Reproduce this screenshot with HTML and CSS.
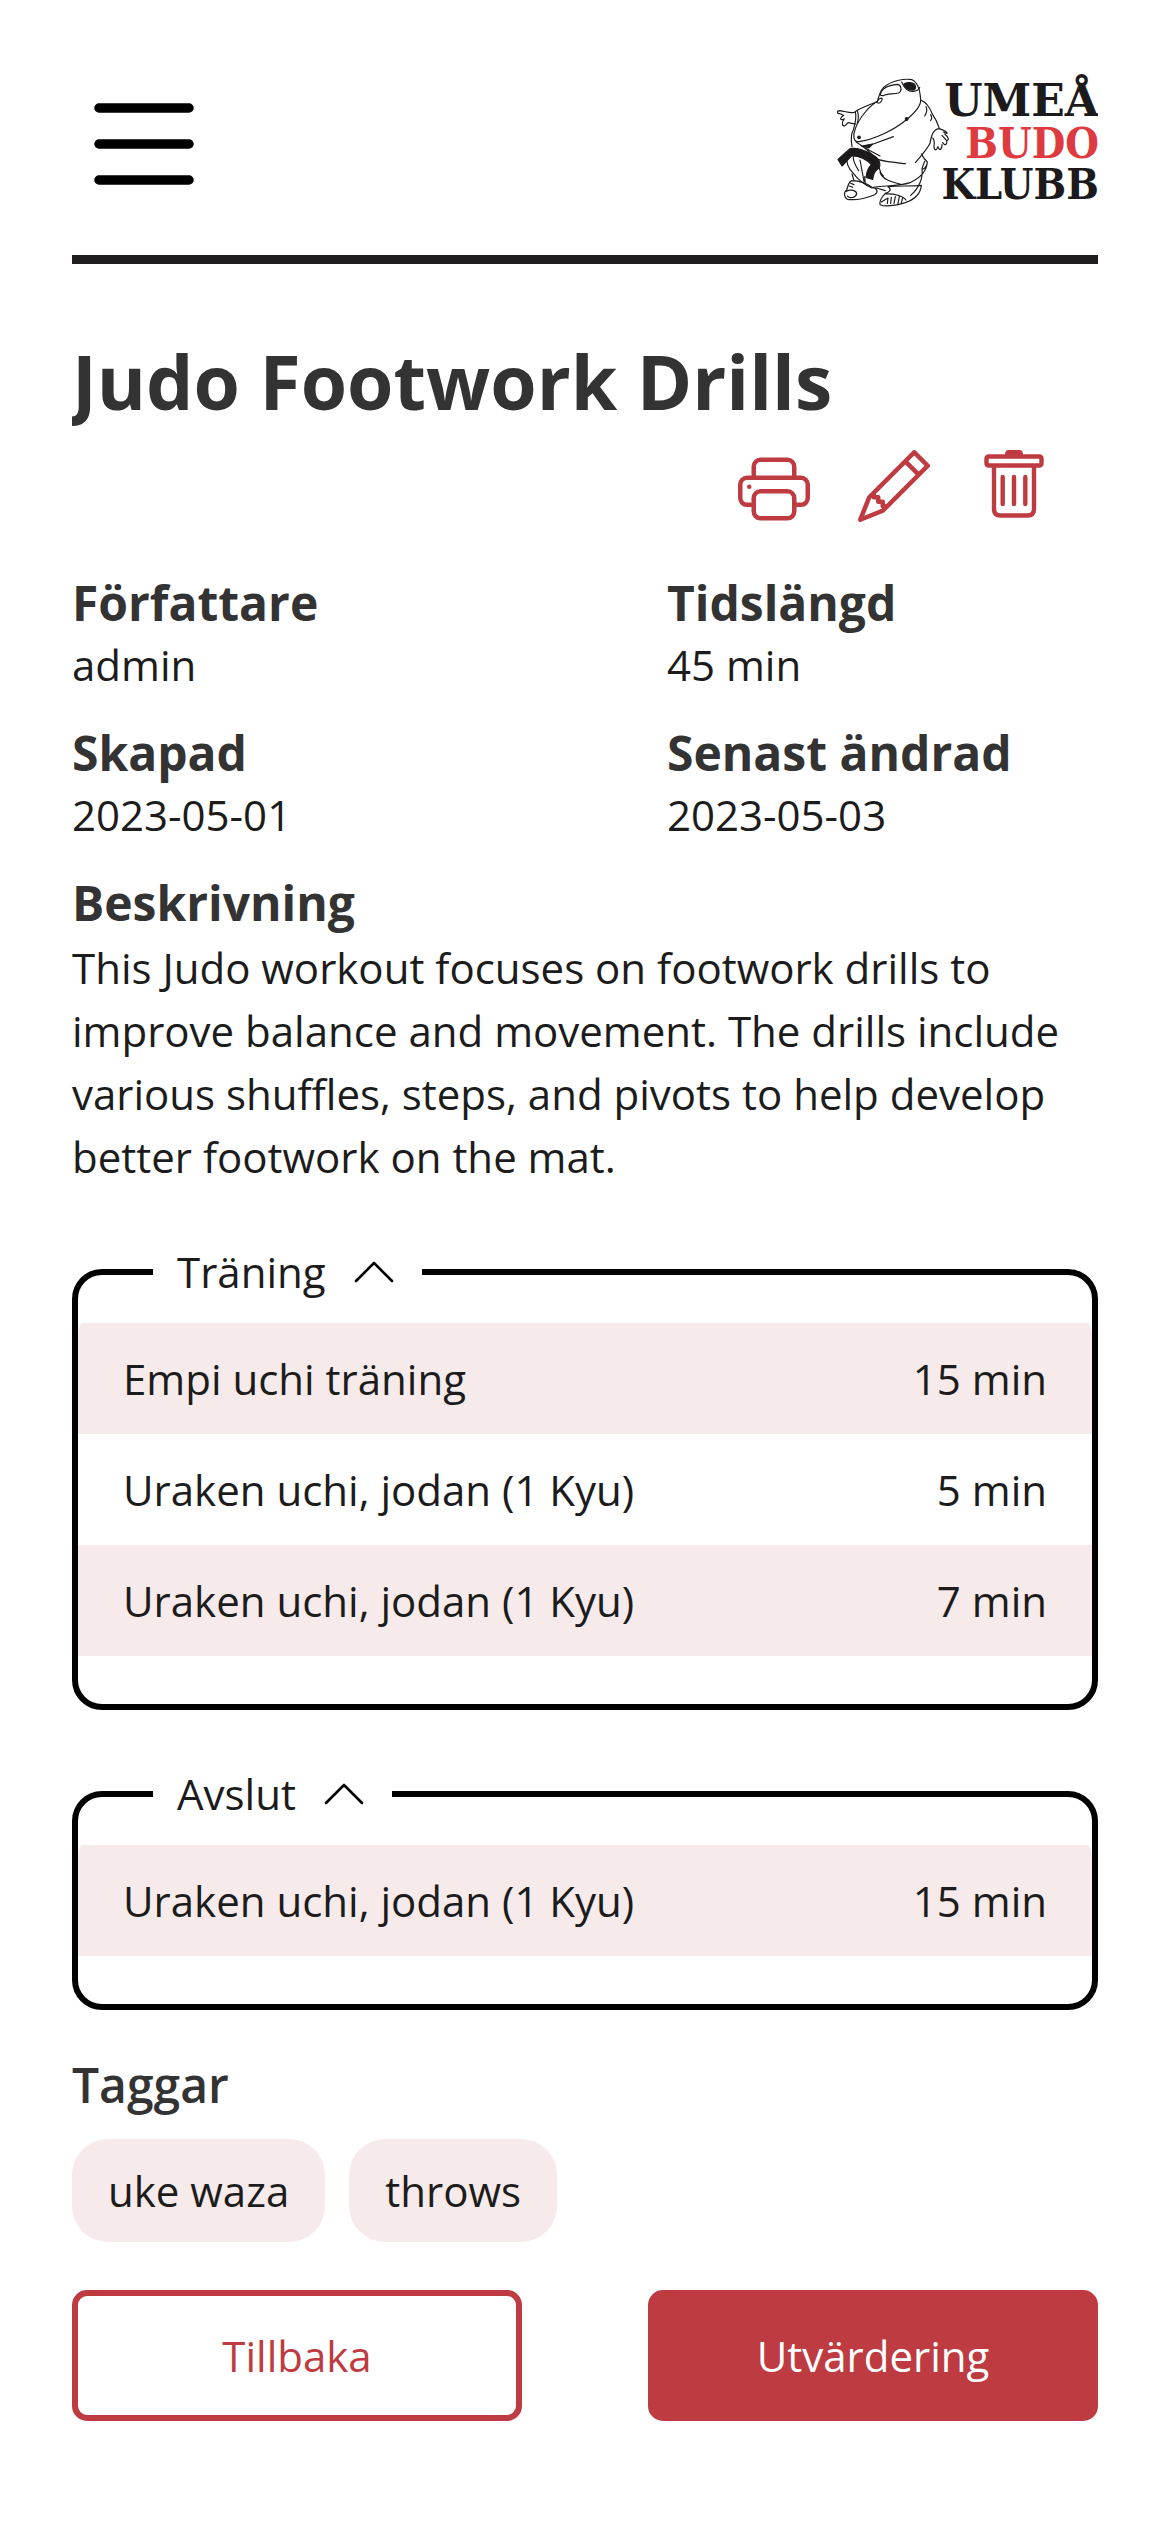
FILE: index.html
```html
<!DOCTYPE html>
<html lang="sv">
<head>
  <meta charset="utf-8">
  <meta name="viewport" content="width=device-width, initial-scale=1">
  <title>Judo Footwork Drills</title>
  <link rel="stylesheet" href="styles.css">
</head>
<body>
  <div class="page">
    <header class="site-header">
      <button class="icon-button" type="button" aria-label="Meny">
        <svg class="menu-icon" viewBox="0 0 144 144" fill="none" stroke="#000" stroke-width="9.5" stroke-linecap="round">
          <path d="M27 36H117M27 72H117M27 108H117"/>
        </svg>
      </button>
      <a class="logo-link" href="#" aria-label="Umeå Budoklubb">
        <svg class="logo" viewBox="0 0 264 144">
          <g transform="translate(-14 -12) scale(.33333)" fill="none" stroke="#1c1a1b" stroke-width="3.500" stroke-linejoin="round" stroke-linecap="round">
            <path d="M172 124C178 108 180 88 196 78C214 64 250 54 276 59C292 66 300 82 302 120C303 136 282 160 262 177C220 212 160 240 116 245C100 246 98 226 106 206C116 176 146 140 172 124"/>
            <path d="M181 103C184 86 204 76 232 73C246 76 246 94 236 99C218 103 200 101 190 107C182 106 180 106 181 103M172 124C178 112 192 110 184 124C180 132 172 130 170 126"/>
            <path d="M245 66C252 82 262 96 280 94C292 92 298 88 299 82"/>
            <path d="M252 72C262 66 276 67 284 73C290 84 286 92 274 90C262 88 254 80 252 72Z" fill="#1c1a1b"/>
            <path d="M170 126C148 134 128 142 112 151L103 157C90 160 80 155 60 152C50 152 50 161 60 161L71 166C62 172 58 180 67 179L73 176C64 188 66 198 74 198C82 192 82 186 88 188C96 192 102 190 108 192M106 155C110 170 106 190 100 210C90 226 94 246 96 260M112 151C116 164 116 176 112 188"/>
            <path d="M302 120C322 128 330 144 336 160C348 178 354 192 358 205M318 140C324 152 318 162 314 168M332 164C336 170 336 176 332 182"/>
            <path d="M358 206C344 206 334 224 330 250C322 268 304 286 286 308M358 206C370 210 382 214 381 220L370 216M374 222C386 232 388 240 380 242L366 226M380 242C382 252 376 260 368 248M366 254C366 268 358 274 354 260C348 274 342 272 342 258C344 246 342 238 338 234"/>
            <path d="M108 246C136 262 156 284 172 298C202 306 228 308 256 311M124 258L160 252L220 230M124 258L180 288"/>
            <path d="M130 259L158 252L146 264Z" fill="#1c1a1b"/>
            <path d="M304 282C310 292 314 300 322 306C320 336 300 354 270 368C236 380 192 376 160 382M316 298L306 326C312 330 320 320 322 308M306 326C310 352 298 384 272 406M180 336C186 358 214 366 240 372M176 320C182 330 178 340 190 348"/>
            <path d="M82 290C78 306 84 324 100 340C112 356 128 372 156 384M100 290C98 304 106 316 116 332M120 300L132 364M134 350L136 372M96 342L102 362"/>
            <path d="M96 362C84 366 84 380 80 390C70 396 72 412 82 418C110 422 140 414 164 404C176 396 172 384 156 382C134 366 114 362 96 362M80 394C92 386 110 392 110 402C106 414 88 416 82 408M92 370L102 374M88 378L98 382M170 384L196 392"/>
            <path d="M204 380C216 388 210 396 196 400C186 410 178 424 180 434C196 442 228 436 256 428C284 418 302 400 304 376C270 380 236 376 204 380M196 402C222 400 250 408 258 420M184 426L204 414L202 430M214 412L212 430M226 410L222 430M238 410L234 430M248 414L244 428"/>
            <path d="M54 298L72 282L90 266C110 262 140 272 160 286C184 300 184 322 170 330C162 336 160 344 158 358L138 352C140 334 146 322 154 314C142 300 116 286 94 288L66 318Z" fill="#1c1a1b"/>
            <circle cx="117" cy="232" r="4" fill="#1c1a1b"/>
            <circle cx="260" cy="177" r="4" fill="#1c1a1b"/>
          </g>
          <g class="logo-text" text-anchor="end">
            <text class="logo-line-wide" x="265" y="44">UMEÅ</text>
            <text class="logo-line logo-line-red" x="265" y="86">BUDO</text>
            <text class="logo-line" x="265" y="127">KLUBB</text>
          </g>
        </svg>
      </a>
    </header>

    <main>
      <h1 class="title">Judo Footwork Drills</h1>
      <div class="actions">
        <button class="icon-button" type="button" aria-label="Skriv ut">
          <svg class="action-icon" viewBox="0 -.67 16 16" fill="currentColor">
            <path d="M2.5 8a.5.5 0 1 0 0-1 .5.5 0 0 0 0 1z"/>
            <path d="M5 1a2 2 0 0 0-2 2v2H2a2 2 0 0 0-2 2v3a2 2 0 0 0 2 2h1v1a2 2 0 0 0 2 2h6a2 2 0 0 0 2-2v-1h1a2 2 0 0 0 2-2V7a2 2 0 0 0-2-2h-1V3a2 2 0 0 0-2-2H5zM4 3a1 1 0 0 1 1-1h6a1 1 0 0 1 1 1v2H4V3zm1 5a2 2 0 0 0-2 2v1H2a1 1 0 0 1-1-1V7a1 1 0 0 1 1-1h12a1 1 0 0 1 1 1v3a1 1 0 0 1-1 1h-1v-1a2 2 0 0 0-2-2H5zm7 2v3a1 1 0 0 1-1 1H5a1 1 0 0 1-1-1v-3a1 1 0 0 1 1-1h6a1 1 0 0 1 1 1z"/>
          </svg>
        </button>
        <button class="icon-button" type="button" aria-label="Redigera">
          <svg class="action-icon" viewBox="0 0 16 16" fill="currentColor">
            <path d="M12.146.146a.5.5 0 0 1 .708 0l3 3a.5.5 0 0 1 0 .708l-10 10a.5.5 0 0 1-.168.11l-5 2a.5.5 0 0 1-.65-.65l2-5a.5.5 0 0 1 .11-.168l10-10zM11.207 2.5 13.5 4.793 14.793 3.5 12.5 1.207 11.207 2.5zm1.586 3L10.5 3.207 4 9.707V10h.5a.5.5 0 0 1 .5.5v.5h.5a.5.5 0 0 1 .5.5v.5h.293l6.5-6.5zm-9.761 5.175-.106.106-1.528 3.821 3.821-1.528.106-.106A.5.5 0 0 1 5 12.5V12h-.5a.5.5 0 0 1-.5-.5V11h-.5a.5.5 0 0 1-.468-.325z"/>
          </svg>
        </button>
        <button class="icon-button" type="button" aria-label="Ta bort">
          <svg class="action-icon" viewBox="0 0 72 72" fill="none" stroke="currentColor" stroke-width="4.4" stroke-linecap="round">
            <path d="M27 5C27 2 28 0 31 0H41C44 0 45 2 45 5Z" fill="currentColor" stroke="none"/>
            <rect x="8.5" y="6.5" width="55" height="9" rx="2"/>
            <path d="M16 17V59Q16 65.500 22.500 65.500H49.500Q56 65.500 56 59V17M24.700 27V54M36 27V54M47.300 27V54"/>
          </svg>
        </button>
      </div>

      <dl class="details">
        <div>
          <dt class="heading">Författare</dt>
          <dd class="value">admin</dd>
        </div>
        <div>
          <dt class="heading">Tidslängd</dt>
          <dd class="value">45 min</dd>
        </div>
        <div>
          <dt class="heading">Skapad</dt>
          <dd class="value">2023-05-01</dd>
        </div>
        <div>
          <dt class="heading">Senast ändrad</dt>
          <dd class="value">2023-05-03</dd>
        </div>
      </dl>

      <section class="description">
        <h2 class="heading">Beskrivning</h2>
        <p>This Judo workout focuses on footwork drills to improve balance and movement. The drills include various shuffles, steps, and pivots to help develop better footwork on the mat.</p>
      </section>

      <fieldset class="panel">
        <legend class="panel-legend">
          <button class="panel-toggle" type="button" aria-expanded="true">
            Träning
            <svg class="chevron" viewBox="0 0 48 48" fill="none" stroke="#000" stroke-width="2.600" stroke-linecap="round" stroke-linejoin="round"><path d="M6 33L24 15L42 33"/></svg>
          </button>
        </legend>
        <div class="panel-body">
          <ul>
            <li class="activity"><span>Empi uchi träning</span><span>15 min</span></li>
            <li class="activity"><span>Uraken uchi, jodan (1 Kyu)</span><span>5 min</span></li>
            <li class="activity"><span>Uraken uchi, jodan (1 Kyu)</span><span>7 min</span></li>
          </ul>
        </div>
      </fieldset>

      <fieldset class="panel">
        <legend class="panel-legend">
          <button class="panel-toggle" type="button" aria-expanded="true">
            Avslut
            <svg class="chevron" viewBox="0 0 48 48" fill="none" stroke="#000" stroke-width="2.600" stroke-linecap="round" stroke-linejoin="round"><path d="M6 33L24 15L42 33"/></svg>
          </button>
        </legend>
        <div class="panel-body">
          <ul>
            <li class="activity"><span>Uraken uchi, jodan (1 Kyu)</span><span>15 min</span></li>
          </ul>
        </div>
      </fieldset>

      <section class="tag-section">
        <h2 class="heading heading-light">Taggar</h2>
        <ul class="tags">
          <li class="tag">uke waza</li>
          <li class="tag">throws</li>
        </ul>
      </section>

      <div class="buttons">
        <button class="button button-outline" type="button">Tillbaka</button>
        <button class="button button-filled" type="button">Utvärdering</button>
      </div>
    </main>
  </div>
</body>
</html>
```
FILE: styles.css
```css
* {
  box-sizing: border-box;
}

body {
  margin: 0;
  background: #fff;
  color: #1c1c1c;
  font-family: "Open Sans", sans-serif;
  font-size: 42px;
  line-height: 63px;
}

h1, h2, p, dl, dd, ul {
  margin: 0;
  padding: 0;
}

ul {
  list-style: none;
}

svg {
  display: block;
}

button {
  font: inherit;
  cursor: pointer;
}

.page {
  padding: 72px;
}

.site-header {
  display: flex;
  justify-content: space-between;
  padding-bottom: 39px;
  border-bottom: 9px solid #201e1f;
}

.icon-button {
  padding: 0;
  border: 0;
  background: none;
  color: #be3b41;
}

.menu-icon {
  width: 144px;
  height: 144px;
}

.logo {
  width: 264px;
  height: 144px;
}

.logo-text {
  fill: #1c1a1b;
  font-weight: 700;
}

.logo-line-wide {
  font-family: "DejaVu Serif", serif;
  font-size: 44px;
}

.logo-line {
  font-family: "DejaVu Serif Condensed", "DejaVu Serif", serif;
  font-size: 43px;
}

.logo-line-red {
  fill: #de3a40;
}

.title {
  margin-top: 66px;
  overflow: hidden;
  color: #333;
  font-size: 75px;
  font-weight: 700;
  line-height: 102px;
}

.actions {
  display: flex;
  justify-content: flex-end;
  gap: 48px;
  margin-top: 18px;
  padding-right: 48px;
}

.action-icon {
  width: 72px;
  height: 72px;
}

.details {
  display: grid;
  grid-template-columns: 1fr 1fr;
  column-gap: 164px;
  row-gap: 26px;
  margin-top: 48px;
}

.heading {
  color: #333;
  font-size: 48px;
  font-weight: 700;
  line-height: 66px;
  white-space: nowrap;
}

.heading-light {
  font-weight: 600;
}

.value {
  line-height: 58px;
}

.description {
  margin-top: 26px;
}

.panel {
  min-width: 0;
  margin: 54px 0 0;
  padding: 0 0 48px;
  border: 6px solid #000;
  border-radius: 30px;
}

.panel-legend {
  margin-left: 75px;
  padding: 0 24px;
}

.panel-toggle {
  display: flex;
  align-items: center;
  gap: 24px;
  padding: 0;
  border: 0;
  background: none;
  color: inherit;
  line-height: 60px;
}

.chevron {
  width: 48px;
  height: 48px;
}

.panel-body {
  margin-top: 9px;
  padding-top: 12px;
  border-radius: 24px 24px 0 0;
  overflow: hidden;
}

.activity {
  display: flex;
  justify-content: space-between;
  padding: 24px 45px;
}

.activity:nth-child(odd) {
  background: #f7eaea;
}

.tag-section {
  margin-top: 42px;
}

.tags {
  display: flex;
  gap: 24px;
  margin-top: 21px;
}

.tag {
  padding: 20px 36px;
  border-radius: 36px;
  background: #f7eaea;
}

.buttons {
  display: flex;
  justify-content: space-between;
  gap: 126px;
  margin-top: 48px;
}

.button {
  flex: 1;
  padding: 28px 24px;
  border: 6px solid #be3b41;
  border-radius: 15px;
}

.button-outline {
  background: #fff;
  color: #be3b41;
}

.button-filled {
  background: #be3b41;
  color: #fff;
}
```
